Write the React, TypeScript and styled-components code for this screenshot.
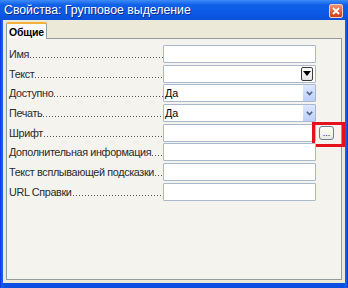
import styled, { createGlobalStyle } from "styled-components";

const GlobalStyle = createGlobalStyle`
  html, body {
    margin: 0;
    padding: 0;
    background: #ffffff;
  }
  body {
    font-family: "Liberation Sans", Arial, sans-serif;
  }
`;

const Window = styled.div`
  width: 348px;
  height: 288px;
  box-sizing: border-box;
  display: flex;
  flex-direction: column;
  background: linear-gradient(90deg, #0831d9 0px, #1b63f0 2px, #0a4fe0 4px, #0a4fe0 344px, #1b63f0 346px, #0831d9 348px);
  padding: 0 3px 5px 3px;
`;

const TitleBar = styled.div`
  height: 20px;
  margin: 0 -3px;
  padding: 0 5px 0 4px;
  display: flex;
  align-items: center;
  justify-content: space-between;
  background: linear-gradient(180deg, #3d8cf8 0%, #0f5fe8 25%, #0a58e4 70%, #0a4fd8 100%);
`;

const Title = styled.span`
  color: #ffffff;
  font-size: 12.3px;
  text-shadow: 1px 1px 0 #0a2a8a;
`;

const CloseButton = styled.div`
  width: 12px;
  height: 12px;
  margin-top: 2px;
  border: 1px solid #f4d0c0;
  border-radius: 2px;
  background: linear-gradient(180deg, #f09070 0%, #e05a30 60%, #c8401c 100%);
  display: flex;
  align-items: center;
  justify-content: center;
`;

const Client = styled.div`
  flex: 1;
  display: flex;
  flex-direction: column;
  background: #ece9d8;
  padding: 2px 3px 3px 3px;
`;

const TabStrip = styled.div`
  display: flex;
  height: 16px;
  position: relative;
  z-index: 1;
`;

const Tab = styled.div`
  box-sizing: border-box;
  height: 17px;
  padding: 0 2px;
  border: 1px solid #919b9c;
  border-top: 2px solid #f5b03c;
  border-bottom: none;
  border-radius: 2px 2px 0 0;
  background: #fcfcfe;
  font-size: 10.5px;
  font-weight: bold;
  letter-spacing: -0.2px;
  color: #000;
  display: flex;
  align-items: center;
`;

const Panel = styled.div`
  flex: 1;
  border: 1px solid #919b9c;
  background: #f4f3ee;
  padding: 6px 2px 0 2px;
  display: flex;
  flex-direction: column;
  gap: 1.7px;
`;

const Row = styled.div`
  display: flex;
  align-items: center;
  height: 18px;
`;

const Label = styled.div`
  width: 154px;
  flex: none;
  display: flex;
  align-items: baseline;
  font-size: 10.8px;
  letter-spacing: -0.35px;
  color: #2a2a2a;
  white-space: nowrap;
`;

const Leader = styled.span`
  flex: 1;
  min-width: 0;
  height: 1px;
  margin-left: 1px;
  background-image: linear-gradient(90deg, #555 1px, transparent 1px);
  background-size: 3px 1px;
  background-repeat: repeat-x;
`;

const Field = styled.div`
  position: relative;
  box-sizing: border-box;
  width: 153px;
  height: 18px;
  border: 1px solid #a9b8cc;
  border-radius: 1px;
  background: #ffffff;
  display: flex;
  align-items: center;
  justify-content: space-between;
  font-size: 10.8px;
  color: #000;
  padding-left: 1px;
`;

const DropButton = styled.div`
  box-sizing: border-box;
  width: 12px;
  height: 14px;
  margin-right: 2px;
  border: 1px solid #3a3a3a;
  border-radius: 2px;
  background: linear-gradient(180deg, #ffffff, #e4e4e4);
  display: flex;
  align-items: center;
  justify-content: center;
`;

const ComboButton = styled.div`
  width: 12px;
  height: 16px;
  background: linear-gradient(180deg, #dce8ff, #bcd0f8);
  display: flex;
  align-items: center;
  justify-content: center;
`;

const Browse = styled.div`
  position: relative;
  margin-left: 3px;
  box-sizing: border-box;
  width: 15px;
  height: 14px;
  border: 1px solid #6d7d94;
  border-radius: 3px;
  background: linear-gradient(180deg, #ffffff, #e8e8e4);
  font-size: 9px;
  color: #222;
  display: flex;
  align-items: flex-end;
  justify-content: center;
  line-height: 9px;
  padding-bottom: 1px;
`;

const Highlight = styled.div`
  position: absolute;
  left: -8px;
  top: -5px;
  width: 33px;
  height: 25px;
  box-sizing: border-box;
  border: 3px solid #e4121c;
`;

type RowKind = "text" | "drop" | "combo" | "browse";

const rows: { label: string; kind: RowKind; value?: string }[] = [
  { label: "Имя", kind: "text" },
  { label: "Текст", kind: "drop" },
  { label: "Доступно", kind: "combo", value: "Да" },
  { label: "Печать", kind: "combo", value: "Да" },
  { label: "Шрифт", kind: "browse" },
  { label: "Дополнительная информация", kind: "text" },
  { label: "Текст всплывающей подсказки", kind: "text" },
  { label: "URL Справки", kind: "text" },
];

export default function App() {
  return (
    <>
      <GlobalStyle />
      <Window>
        <TitleBar>
          <Title>Свойства: Групповое выделение</Title>
          <CloseButton>
            <svg width="8" height="8" viewBox="0 0 8 8">
              <path d="M1 1 L7 7 M7 1 L1 7" stroke="#ffffff" strokeWidth="1.8" />
            </svg>
          </CloseButton>
        </TitleBar>
        <Client>
          <TabStrip>
            <Tab>Общие</Tab>
          </TabStrip>
          <Panel>
            {rows.map((r) => (
              <Row key={r.label}>
                <Label>
                  <span>{r.label}</span>
                  <Leader />
                </Label>
                <Field>
                  <span>{r.value ?? ""}</span>
                  {r.kind === "drop" && (
                    <DropButton>
                      <svg width="8" height="5" viewBox="0 0 8 5">
                        <path d="M0 0 H8 L4 5 Z" fill="#000" />
                      </svg>
                    </DropButton>
                  )}
                  {r.kind === "combo" && (
                    <ComboButton>
                      <svg width="7" height="5" viewBox="0 0 7 5">
                        <path d="M0.8 0.8 L3.5 3.5 L6.2 0.8" stroke="#4d6185" strokeWidth="1.6" fill="none" />
                      </svg>
                    </ComboButton>
                  )}
                </Field>
                {r.kind === "browse" && (
                  <Browse>
                    ...
                    <Highlight />
                  </Browse>
                )}
              </Row>
            ))}
          </Panel>
        </Client>
      </Window>
    </>
  );
}
